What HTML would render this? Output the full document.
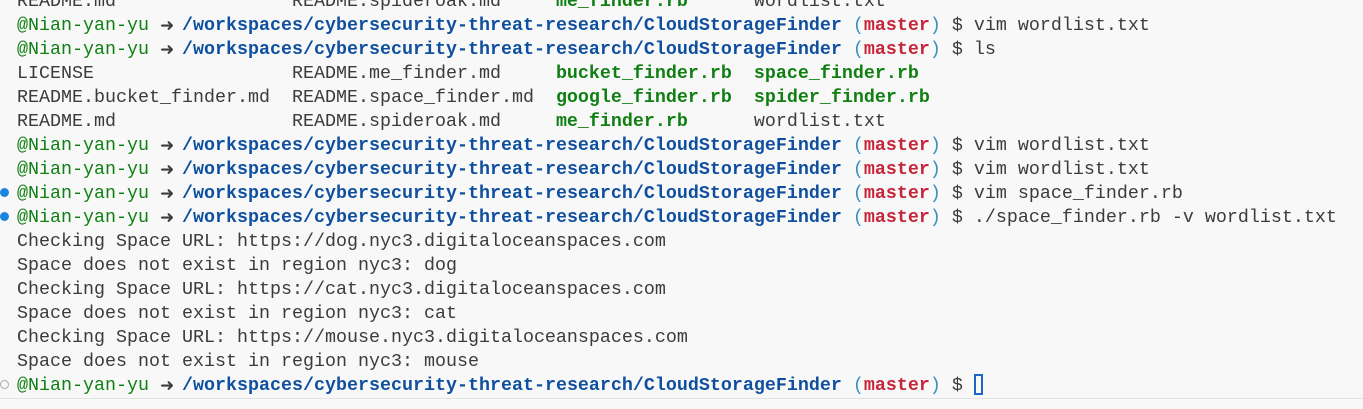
<!DOCTYPE html>
<html><head><meta charset="utf-8"><style>
html,body{margin:0;padding:0;background:#f8f8f8;width:1363px;height:409px;overflow:hidden;position:relative}
.t{position:absolute;left:17px;top:-10px;font-family:"Liberation Mono",monospace;font-size:18.33px;line-height:24px;color:#3b3b3b;white-space:pre}
.l{height:24px;overflow:visible}
.u{color:#0f7f12}
.a{display:inline-block;width:11px;height:24px;line-height:24px;vertical-align:top;overflow:visible;color:#3b3b3b;font-family:"DejaVu Sans",sans-serif;font-size:17px;font-weight:bold}
.p{color:#0f4fa0;font-weight:bold}
.b{color:#3a8fc2}
.m{color:#c8243a;font-weight:bold}
.g{color:#0f7f12;font-weight:bold}
.dot{position:absolute;left:0;width:9px;height:9px;border-radius:50%;background:#1a85e0}
.hol{position:absolute;left:0;width:7px;height:7px;border-radius:50%;border:1px solid #aaa}
.cur{display:inline-block;width:9px;height:21px;border:2px solid #1a66c8;box-sizing:border-box;vertical-align:-5px}
.bar{position:absolute;left:0;right:0;top:398px;height:1px;background:#e3e3e3}
</style></head><body>
<div class="t"><div class="l">README.md                README.spideroak.md     <span class="g">me_finder.rb</span>      wordlist.txt</div><div class="l"><span class="u">@Nian-yan-yu </span><span class="a">➜</span> <span class="p">/workspaces/cybersecurity-threat-research/CloudStorageFinder</span> <span class="b">(</span><span class="m">master</span><span class="b">)</span> $ vim wordlist.txt</div><div class="l"><span class="u">@Nian-yan-yu </span><span class="a">➜</span> <span class="p">/workspaces/cybersecurity-threat-research/CloudStorageFinder</span> <span class="b">(</span><span class="m">master</span><span class="b">)</span> $ ls</div><div class="l">LICENSE                  README.me_finder.md     <span class="g">bucket_finder.rb</span>  <span class="g">space_finder.rb</span></div><div class="l">README.bucket_finder.md  README.space_finder.md  <span class="g">google_finder.rb</span>  <span class="g">spider_finder.rb</span></div><div class="l">README.md                README.spideroak.md     <span class="g">me_finder.rb</span>      wordlist.txt</div><div class="l"><span class="u">@Nian-yan-yu </span><span class="a">➜</span> <span class="p">/workspaces/cybersecurity-threat-research/CloudStorageFinder</span> <span class="b">(</span><span class="m">master</span><span class="b">)</span> $ vim wordlist.txt</div><div class="l"><span class="u">@Nian-yan-yu </span><span class="a">➜</span> <span class="p">/workspaces/cybersecurity-threat-research/CloudStorageFinder</span> <span class="b">(</span><span class="m">master</span><span class="b">)</span> $ vim wordlist.txt</div><div class="l"><span class="u">@Nian-yan-yu </span><span class="a">➜</span> <span class="p">/workspaces/cybersecurity-threat-research/CloudStorageFinder</span> <span class="b">(</span><span class="m">master</span><span class="b">)</span> $ vim space_finder.rb</div><div class="l"><span class="u">@Nian-yan-yu </span><span class="a">➜</span> <span class="p">/workspaces/cybersecurity-threat-research/CloudStorageFinder</span> <span class="b">(</span><span class="m">master</span><span class="b">)</span> $ ./space_finder.rb -v wordlist.txt</div><div class="l">Checking Space URL: https://dog.nyc3.digitaloceanspaces.com</div><div class="l">Space does not exist in region nyc3: dog</div><div class="l">Checking Space URL: https://cat.nyc3.digitaloceanspaces.com</div><div class="l">Space does not exist in region nyc3: cat</div><div class="l">Checking Space URL: https://mouse.nyc3.digitaloceanspaces.com</div><div class="l">Space does not exist in region nyc3: mouse</div><div class="l"><span class="u">@Nian-yan-yu </span><span class="a">➜</span> <span class="p">/workspaces/cybersecurity-threat-research/CloudStorageFinder</span> <span class="b">(</span><span class="m">master</span><span class="b">)</span> $ <span class="cur"></span></div></div>
<div class="dot" style="top:188px"></div>
<div class="dot" style="top:212px"></div>
<div class="hol" style="top:380px"></div>
<div class="bar"></div>
</body></html>
